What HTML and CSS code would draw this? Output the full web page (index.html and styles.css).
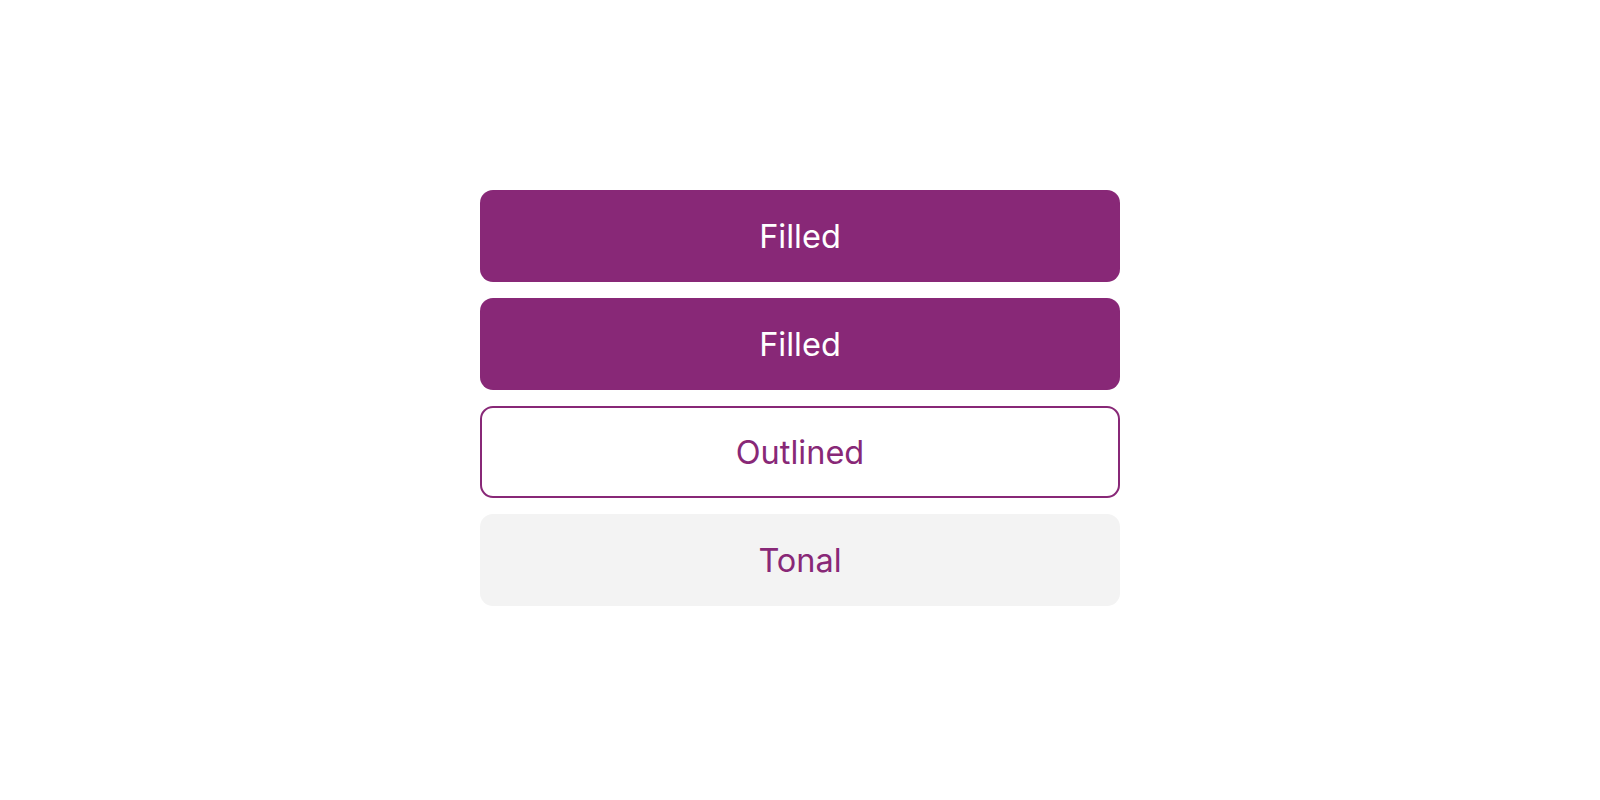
FILE: index.html
```html
<!DOCTYPE html>
<html>
<head>
<meta charset="utf-8">
<link rel="stylesheet" href="styles.css">
</head>
<body>
<main class="stage">
  <div class="stack">
    <button class="btn filled">Filled</button>
    <button class="btn filled">Filled</button>
    <button class="btn outlined">Outlined</button>
    <button class="btn tonal">Tonal</button>
  </div>
</main>
</body>
</html>
```
FILE: styles.css
```css
html, body {
  margin: 0;
  padding: 0;
  background: #ffffff;
}
.stage {
  width: 1600px;
  height: 800px;
  display: flex;
  justify-content: center;
  align-items: flex-start;
  padding-top: 190px;
  box-sizing: border-box;
}
.stack {
  width: 640px;
  display: flex;
  flex-direction: column;
  gap: 16px;
}
.btn {
  height: 92px;
  border-radius: 13px;
  border: none;
  font-family: Inter, "Noto Sans", sans-serif;
  font-size: 32.5px;
  font-weight: 400;
  display: flex;
  align-items: center;
  justify-content: center;
  padding: 1px 0 0;
  box-sizing: border-box;
}
.filled {
  background: #882877;
  color: #ffffff;
}
.outlined {
  background: #ffffff;
  color: #882877;
  border: 2px solid #882877;
}
.tonal {
  background: #f3f3f3;
  color: #882877;
}
```
